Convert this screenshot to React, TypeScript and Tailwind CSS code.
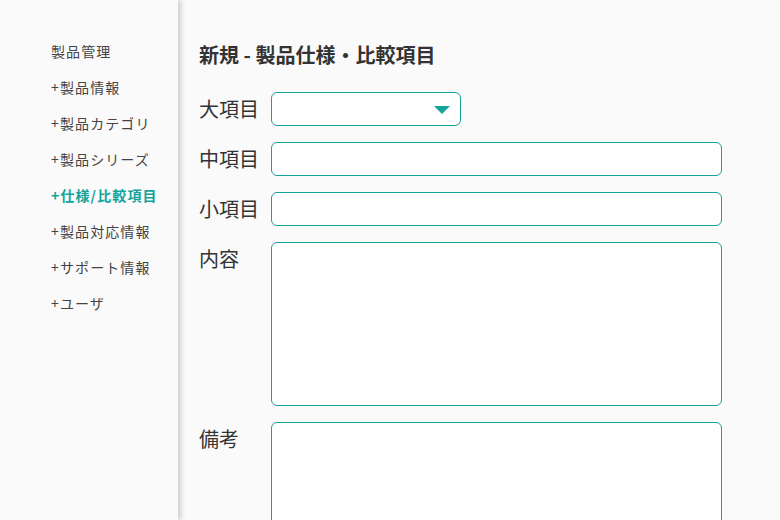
import { useState } from 'react';

const menu = [
  { label: '+製品情報' },
  { label: '+製品カテゴリ' },
  { label: '+製品シリーズ' },
  { label: '+仕様/比較項目', active: true },
  { label: '+製品対応情報' },
  { label: '+サポート情報' },
  { label: '+ユーザ' },
];

const font = { fontFamily: '"Noto Sans CJK JP", "Noto Sans", sans-serif' };

export default function App() {
  const [major, setMajor] = useState('');

  return (
    <div className="flex h-[520px] w-[780px] overflow-hidden bg-[#fafafa] text-[#333]" style={font}>
      <aside className="relative z-10 w-[178px] shrink-0 bg-[#fafafa] pl-[51px] pt-[40px] shadow-[3px_0_5px_rgba(0,0,0,0.18)]">
        <div className="h-[36px] text-[14px] leading-[22px] tracking-[0.08em] text-[#444]">製品管理</div>
        {menu.map((m) => (
          <div
            key={m.label}
            className={
              m.active
                ? 'h-[36px] text-[14px] leading-[22px] tracking-[0.08em] font-bold text-[#14a39a]'
                : 'h-[36px] text-[14px] leading-[22px] tracking-[0.08em] text-[#444]'
            }
          >
            {m.label}
          </div>
        ))}
      </aside>

      <main className="flex-1 pl-[21px] pt-[41px]">
        <h1 className="text-[20px] font-bold leading-[28px] text-[#333]">新規 - 製品仕様・比較項目</h1>

        <div className="mt-[23px] flex flex-col gap-[16px]">
          <div className="flex items-start">
            <label className="w-[72px] text-[20px] leading-[34px]">大項目</label>
            <div className="relative w-[190px]">
              <select
                value={major}
                onChange={(e) => setMajor(e.target.value)}
                className="h-[34px] w-full appearance-none rounded-[6px] border border-[#14a39a] bg-white px-2 outline-none"
              >
                <option value=""></option>
              </select>
              <svg className="pointer-events-none absolute right-[11px] top-[14px]" width="16" height="8" viewBox="0 0 16 8">
                <path d="M0 0 L16 0 L8 8 Z" fill="#14a39a" />
              </svg>
            </div>
          </div>

          <div className="flex items-start">
            <label className="w-[72px] text-[20px] leading-[34px]">中項目</label>
            <input className="h-[34px] w-[451px] rounded-[6px] border border-[#14a39a] bg-white px-2 outline-none" />
          </div>

          <div className="flex items-start">
            <label className="w-[72px] text-[20px] leading-[34px]">小項目</label>
            <input className="h-[34px] w-[451px] rounded-[6px] border border-[#14a39a] bg-white px-2 outline-none" />
          </div>

          <div className="flex items-start">
            <label className="w-[72px] text-[20px] leading-[34px]">内容</label>
            <textarea className="h-[164px] w-[451px] resize-none rounded-[6px] border border-[#14a39a] bg-white px-2 outline-none" />
          </div>

          <div className="flex items-start">
            <label className="w-[72px] text-[20px] leading-[34px]">備考</label>
            <textarea className="h-[164px] w-[451px] resize-none rounded-[6px] border border-[#14a39a] bg-white px-2 outline-none" />
          </div>
        </div>
      </main>
    </div>
  );
}
